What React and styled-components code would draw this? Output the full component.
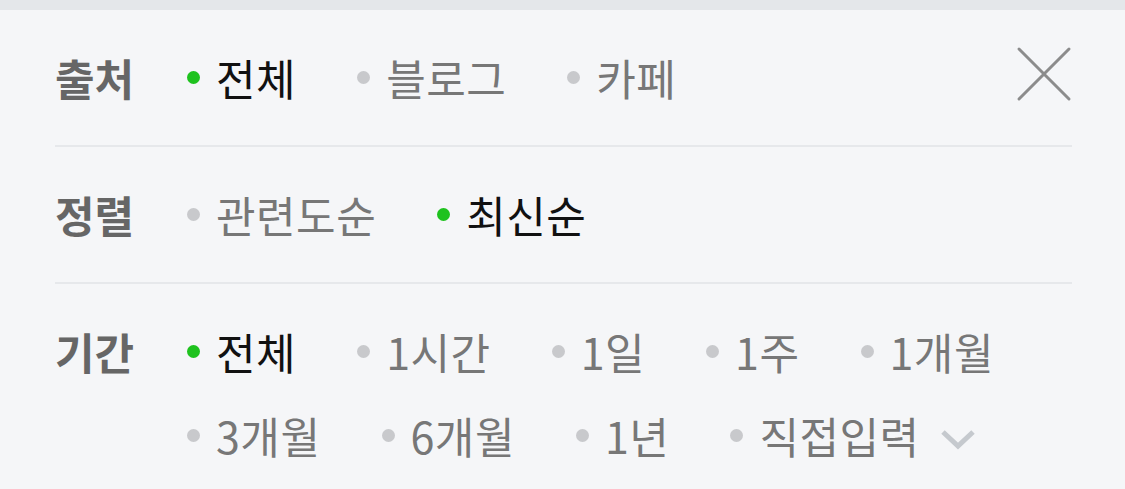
import React from 'react'
import styled, { createGlobalStyle } from 'styled-components'

const GlobalStyle = createGlobalStyle`
  html, body {
    margin: 0;
    padding: 0;
    background: #f5f6f8;
  }
  body {
    font-family: "Noto Sans CJK KR", "Noto Sans", sans-serif;
  }
`

const sections = [
  { label: '출처', items: ['전체', '블로그', '카페'], selected: '전체', close: true },
  { label: '정렬', items: ['관련도순', '최신순'], selected: '최신순' },
  {
    label: '기간',
    items: ['전체', '1시간', '1일', '1주', '1개월', '3개월', '6개월', '1년', '직접입력'],
    selected: '전체',
    more: '직접입력',
  },
]

const App = () => {
  return (
    <>
      <GlobalStyle />
      <TopBand />
      <Panel>
        {sections.map((s, i) => (
          <Section key={s.label} last={i === sections.length - 1}>
            <Label>{s.label}</Label>
            <Options>
              {s.items.map((item) => (
                <Option key={item} active={item === s.selected}>
                  <Dot active={item === s.selected} />
                  {item}
                  {s.more === item && (
                    <Chevron viewBox="0 0 36 22">
                      <path d="M3 4 L18 18 L33 4" fill="none" stroke="#c5c9ce" strokeWidth="5" />
                    </Chevron>
                  )}
                </Option>
              ))}
            </Options>
            {s.close && (
              <CloseButton aria-label="닫기">
                <svg width="56" height="56" viewBox="0 0 56 56">
                  <path d="M3 3 L53 53 M53 3 L3 53" stroke="#8c8c8c" strokeWidth="3" strokeLinecap="round" />
                </svg>
              </CloseButton>
            )}
          </Section>
        ))}
      </Panel>
    </>
  )
}

export default App

const TopBand = styled.div`
  height: 10px;
  background: #e4e7ea;
`

const Panel = styled.div`
  padding: 0 53px 0 55px;
`

const Section = styled.div`
  display: flex;
  align-items: flex-start;
  padding: 38px 0 ${(p) => (p.last ? '30px' : '39px')};
  border-bottom: ${(p) => (p.last ? 'none' : '2px solid #e6e8eb')};
`

const Label = styled.div`
  flex: 0 0 132px;
  font-size: 43px;
  line-height: 58px;
  font-weight: 700;
  color: #666;
`

const Options = styled.div`
  flex: 1;
  display: flex;
  flex-wrap: wrap;
  column-gap: 61px;
  row-gap: 26px;
  max-width: 830px;
`

const Option = styled.div`
  display: flex;
  align-items: center;
  font-size: 43px;
  line-height: 58px;
  color: ${(p) => (p.active ? '#111' : '#777')};
  letter-spacing: 0.5px;
  white-space: nowrap;
`

const Dot = styled.span`
  width: 13px;
  height: 13px;
  border-radius: 50%;
  margin-right: 16px;
  background: ${(p) => (p.active ? '#1ec21e' : '#c8c9cc')};
`

const Chevron = styled.svg`
  width: 36px;
  height: 22px;
  margin-left: 20px;
  margin-top: 8px;
`

const CloseButton = styled.button`
  margin-left: auto;
  margin-top: -2px;
  padding: 0;
  border: 0;
  background: none;
  width: 56px;
  height: 56px;
  display: flex;
`
